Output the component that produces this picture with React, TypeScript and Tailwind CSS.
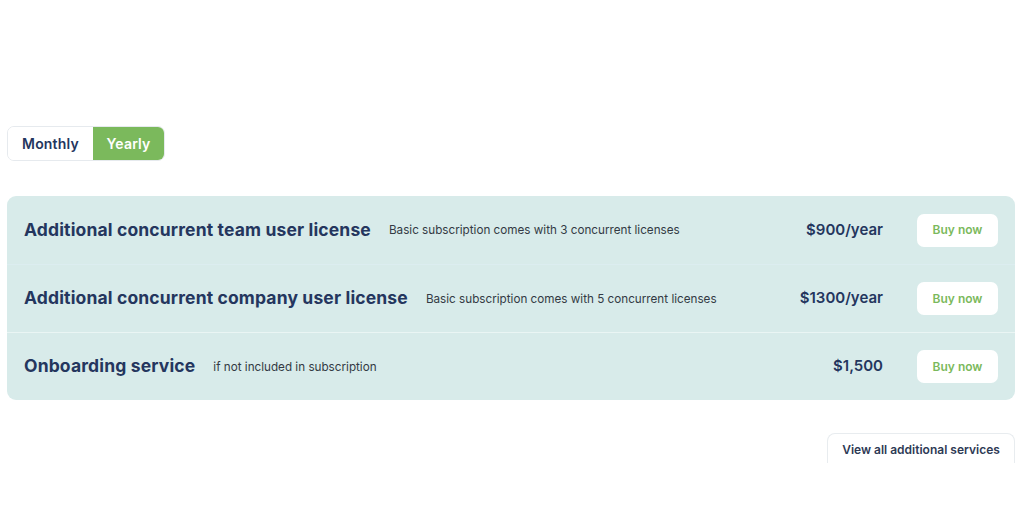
const rows = [
  { title: 'Additional concurrent team user license', note: 'Basic subscription comes with 3 concurrent licenses', price: '$900/year' },
  { title: 'Additional concurrent company user license', note: 'Basic subscription comes with 5 concurrent licenses', price: '$1300/year' },
  { title: 'Onboarding service', note: 'if not included in subscription', price: '$1,500' },
]

export default function App() {
  return (
    <div className="w-[1024px] h-[512px] bg-white overflow-hidden font-['Inter',sans-serif] text-[#24365e]">
      <div className="pt-[126px] pl-[7px]">
        {/* billing toggle */}
        <div className="flex h-[35px] w-[158px] rounded-[7px] overflow-hidden border border-[#e6eaee]">
          <button className="w-[85px] bg-white text-[14px] font-semibold text-[#24365e] tracking-[0.2px]">Monthly</button>
          <button className="flex-1 bg-[#7bb95c] text-[14px] font-semibold text-white tracking-[0.2px]">Yearly</button>
        </div>

        {/* services */}
        <div className="mt-[35px] w-[1008px] rounded-[9px] bg-[#d8ebea] overflow-hidden">
          {rows.map((r, i) => (
            <div
              key={r.title}
              className={`flex items-center h-[68px] pl-[17px] pr-[17px] ${i === 1 ? 'border-t border-[#dcedf0]' : ''} ${i === 2 ? 'border-t border-[#eaf5f4]' : ''}`}
            >
              <h3 className="text-[17.5px] font-bold tracking-[0.15px] whitespace-nowrap">{r.title}</h3>
              <span className="ml-[18px] mt-[2px] text-[11.7px] text-[#333a44] whitespace-nowrap">{r.note}</span>
              <span className="ml-auto text-[15px] font-semibold">{r.price}</span>
              <button className="ml-[34px] w-[81px] h-[33px] rounded-[7px] bg-white text-[12px] font-semibold text-[#7bb95c]">Buy now</button>
            </div>
          ))}
        </div>

        <div className="flex justify-end w-[1008px] mt-[33px]">
          <button className="w-[188px] h-[30px] rounded-t-[8px] border-x border-t border-[#e8ecef] bg-white text-[12px] font-semibold text-[#2e3a55] pt-[3px]">
            View all additional services
          </button>
        </div>
      </div>
    </div>
  )
}
